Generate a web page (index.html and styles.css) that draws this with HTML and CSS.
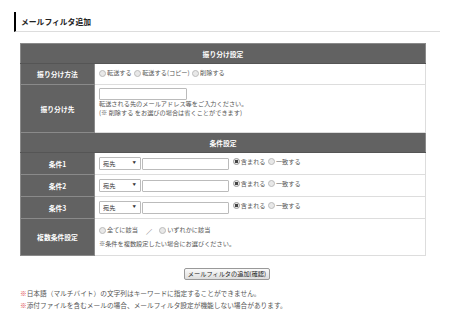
FILE: index.html
```html
<!DOCTYPE html>
<html lang="ja">
<head>
<meta charset="UTF-8">
<title>メールフィルタ追加</title>
<link rel="stylesheet" href="styles.css">
</head>
<body>

<div class="page">

<h1 class="title">メールフィルタ追加</h1>

<table class="form">
<tr>
<th class="section" colspan="2">振り分け設定</th>
</tr>
<tr class="row-method">
<th>振り分け方法</th>
<td>
<label><input type="radio" name="method">転送する</label>
<label><input type="radio" name="method">転送する(コピー)</label>
<label><input type="radio" name="method">削除する</label>
</td>
</tr>
<tr class="row-dest">
<th>振り分け先</th>
<td>
<input type="text" class="addr">
<p>転送される先のメールアドレス等をご入力ください。</p>
<p>(※ 削除する をお選びの場合は省くことができます)</p>
</td>
</tr>
<tr>
<th class="section" colspan="2">条件設定</th>
</tr>
<tr class="row-cond">
<th>条件1</th>
<td>
<span class="select"><select><option>宛先</option></select></span>
<input type="text" class="keyword">
<label><input type="radio" name="c1" checked>含まれる</label>
<label><input type="radio" name="c1">一致する</label>
</td>
</tr>
<tr class="row-cond">
<th>条件2</th>
<td>
<span class="select"><select><option>宛先</option></select></span>
<input type="text" class="keyword">
<label><input type="radio" name="c2" checked>含まれる</label>
<label><input type="radio" name="c2">一致する</label>
</td>
</tr>
<tr class="row-cond">
<th>条件3</th>
<td>
<span class="select"><select><option>宛先</option></select></span>
<input type="text" class="keyword">
<label><input type="radio" name="c3" checked>含まれる</label>
<label><input type="radio" name="c3">一致する</label>
</td>
</tr>
<tr class="row-multi">
<th>複数条件設定</th>
<td>
<p><label><input type="radio" name="multi">全てに該当</label><span class="sep">／</span><label><input type="radio" name="multi">いずれかに該当</label></p>
<p>※条件を複数設定したい場合にお選びください。</p>
</td>
</tr>
</table>

<div class="submit">
<button type="button">メールフィルタの追加(確認)</button>
</div>

<p class="note"><span class="mark">※</span>日本語（マルチバイト）の文字列はキーワードに指定することができません。</p>
<p class="note"><span class="mark">※</span>添付ファイルを含むメールの場合、メールフィルタ設定が機能しない場合があります。</p>

</div>

</body>
</html>
```

FILE: styles.css
```css
body {
	margin: 0;
	background-color: #fff;
	color: #555;
	font-family: "Noto Sans CJK JP", sans-serif;
	font-size: 6.2px;
}

.page {
	padding: 12px 10px 0 14px;
}

p {
	margin: 0;
}

.title {
	display: flex;
	align-items: center;
	width: 426px;
	height: 20px;
	margin: 0;
	padding-left: 5px;
	border-left: 2px solid #000;
	border-bottom: 1px solid #ddd;
	box-sizing: border-box;
	color: #222;
	font-size: 7.8px;
	font-weight: bold;
}

/* form table */
.form {
	width: 406px;
	margin: 11px 0 0 6px;
	border-collapse: collapse;
}

.form th, .form td {
	border: 1px solid #ddd;
	padding: 0 4px;
	line-height: 8px;
}

.form th {
	width: 65px;
	background-color: #626262;
	border-color: #8a8a8a;
	color: #fff;
	font-size: 6.8px;
	font-weight: bold;
	text-align: center;
}

.form th.section {
	height: 19px;
	border-bottom-color: #555;
}

.form td {
	background-color: #fff;
	vertical-align: middle;
}

.row-method th, .row-method td {
	height: 20px;
}

.row-dest th, .row-dest td {
	height: 48px;
	box-sizing: border-box;
}

.row-dest td {
	vertical-align: top;
	padding-top: 3px;
}

.row-dest p {
	height: 8.5px;
	line-height: 8.5px;
}

.row-cond th, .row-cond td {
	height: 21px;
}

.row-multi th, .row-multi td {
	height: 36px;
}

.row-multi p {
	line-height: 12px;
}

label {
	display: inline-flex;
	align-items: center;
	margin-right: 1px;
}

input[type="radio"] {
	appearance: none;
	width: 5px;
	height: 5px;
	margin: 0 1px 0 0;
	border: 1px solid #bbb;
	border-radius: 50%;
	background-color: #e8e8e8;
	box-sizing: content-box;
}

input[type="radio"]:checked {
	background: radial-gradient(circle, #444 0, #444 1.6px, #e8e8e8 2px);
	border-color: #999;
}

input[type="text"] {
	height: 12px;
	margin: 0;
	padding: 0;
	border: 1px solid #bbb;
	border-radius: 1px;
	box-sizing: border-box;
	vertical-align: middle;
}

.addr {
	width: 88px;
	display: block;
}

.keyword {
	width: 87px;
	margin-right: 2px !important;
}

.select {
	position: relative;
	display: inline-block;
	vertical-align: middle;
}

.select select {
	appearance: none;
	display: block;
	width: 42px;
	height: 13px;
	margin: 0;
	padding: 0 0 0 3px;
	border: 1px solid #bbb;
	border-radius: 1px;
	background-color: #fff;
	color: #333;
	font-family: inherit;
	font-size: 6.2px;
}

.select:after {
	content: "▼";
	position: absolute;
	top: 4px;
	right: 5px;
	font-size: 3.5px;
	line-height: 1;
	color: #333;
	pointer-events: none;
}

.sep {
	margin: 0 7px 0 7px;
}

.submit {
	width: 406px;
	margin: 12px 0 0 6px;
	text-align: center;
}

.submit button {
	height: 12px;
	margin-left: 8px;
	padding: 0 3px;
	border: 1px solid #999;
	border-radius: 2px;
	background: linear-gradient(#fafafa, #ddd);
	color: #222;
	font-family: inherit;
	font-size: 6.2px;
	line-height: 1;
}

.note {
	margin: 0 0 0 6px;
	font-size: 6.7px;
	line-height: 12px;
}

.submit + .note {
	margin-top: 7px;
}

.mark {
	color: #d44;
}
```
